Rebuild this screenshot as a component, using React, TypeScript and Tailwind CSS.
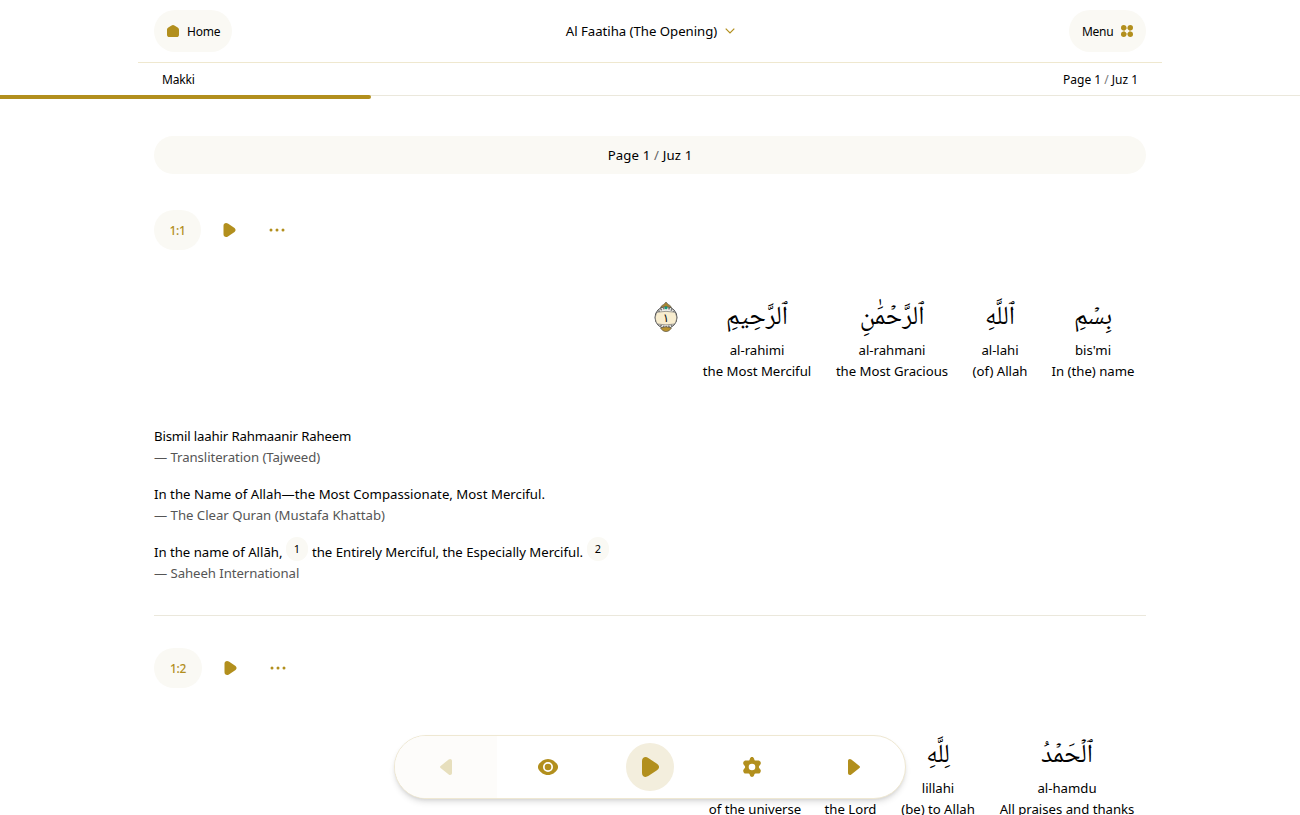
type IconProps = { className?: string };

function PlayIcon({ className = '' }: IconProps) {
  return (
    <svg viewBox="0 0 12 14" className={className} fill="currentColor">
      <path d="M0 2.800C0 .3 2.400-.7 4.400.6l5.900 3.900c2.300 1.500 2.300 3.500 0 5L4.400 13.400C2.400 14.700 0 13.700 0 11.200Z" />
    </svg>
  );
}

function StepIcon({ className = '' }: IconProps) {
  return (
    <svg viewBox="0 0 12 16" className={className} fill="currentColor">
      <path d="M0 2C0 .2 1.9-.5 3.3.6l7.5 5.800c1.600 1.200 1.600 2 0 3.200l-7.500 5.800C1.900 16.500 0 15.800 0 14Z" />
    </svg>
  );
}

function DotsIcon() {
  return (
    <svg viewBox="0 0 16 4" className="h-1 w-4" fill="currentColor">
      <circle cx="2" cy="2" r="1.5" />
      <circle cx="8" cy="2" r="1.5" />
      <circle cx="14" cy="2" r="1.5" />
    </svg>
  );
}

function HomeIcon() {
  return (
    <svg viewBox="0 0 12 12" className="h-3 w-3" fill="currentColor">
      <path d="M4.600.5a2.400 2.400 0 0 1 2.800 0l3.300 2.100c.8.600 1.300 1.300 1.300 2.300v4.500A2.600 2.600 0 0 1 9.400 12H2.600A2.600 2.600 0 0 1 0 9.400V4.900c0-1 .5-1.700 1.300-2.300Z" />
    </svg>
  );
}

function MenuIcon() {
  return (
    <svg viewBox="0 0 12 12" className="h-3 w-3" fill="currentColor">
      <path d="M2.500 2.500h7v7h-7Zm1.300 1.300v4.400h4.400V3.800Z" fillRule="evenodd" opacity=".45" />
      <circle cx="2.700" cy="2.700" r="2.700" />
      <circle cx="9.300" cy="2.700" r="2.700" />
      <circle cx="2.700" cy="9.300" r="2.700" />
      <circle cx="9.300" cy="9.300" r="2.700" />
    </svg>
  );
}

function EyeIcon() {
  return (
    <svg viewBox="0 0 20 16" className="h-4 w-5" fill="currentColor">
      <path
        fillRule="evenodd"
        d="M10 0c4.300 0 7.300 2.600 9.200 5.300 1.100 1.600 1.100 3.800 0 5.400C17.300 13.400 14.300 16 10 16S2.700 13.400.8 10.700c-1.100-1.600-1.100-3.800 0-5.400C2.700 2.600 5.700 0 10 0Zm0 3a5 5 0 1 0 0 10 5 5 0 0 0 0-10Z"
      />
      <circle cx="10" cy="8" r="3.300" />
    </svg>
  );
}

function GearIcon() {
  return (
    <svg viewBox="0 0 20 20" className="h-5 w-5" fill="currentColor">
      <path
        fillRule="evenodd"
        d="M7.900 1.700C8.300.5 9 0 10 0s1.700.5 2.100 1.700l.4 1.200c.2.600.6.800 1.200.7l1.800-.2c1.200-.1 2.200.1 2.800 1.200.7 1.200.7 2.200-.1 3.200l-1 1.300c-.4.500-.4 1.300 0 1.800l1 1.300c.8 1 .8 2 .1 3.200-.6 1.100-1.600 1.300-2.800 1.200l-1.800-.2c-.6-.1-1 .1-1.200.7l-.4 1.200C11.700 19.500 11 20 10 20s-1.700-.5-2.100-1.700l-.4-1.200c-.2-.6-.6-.8-1.200-.7l-1.800.2c-1.200.1-2.200-.1-2.800-1.200-.7-1.200-.7-2.200.1-3.200l1-1.300c.4-.5.4-1.300 0-1.800l-1-1.300c-.8-1-.8-2-.1-3.200.6-1.100 1.600-1.300 2.800-1.200l1.800.2c.6.100 1-.1 1.200-.7ZM10 6.700a3.300 3.300 0 1 0 0 6.600 3.300 3.300 0 0 0 0-6.600Z"
      />
    </svg>
  );
}

function VerseMarker() {
  return (
    <svg viewBox="0 0 24 30" className="h-[30px] w-6">
      <circle cx="12" cy="15.500" r="11" fill="#eeeeea" stroke="#444" strokeWidth="1" />
      <circle cx="12" cy="15.500" r="9.300" fill="none" stroke="#777" strokeWidth="1.800" strokeDasharray="1.500 1.200" />
      <path d="M6.500 5.800C7 3.300 9.500 3 10.600 1.500L12 0l1.400 1.500C14.500 3 17 3.300 17.500 5.800Q12 3.500 6.500 5.800Z" fill="#a58435" stroke="#555" strokeWidth=".6" />
      <path d="M6.500 26Q12 23.500 17.500 26 15.500 29.500 12 29.700 8.500 29.500 6.500 26Z" fill="#b9922f" stroke="#555" strokeWidth=".6" />
      <path d="M3.500 10.200Q12 8.500 20.500 10.200C23.300 13 23.300 18.500 20.500 22Q12 23.800 3.500 22C.7 18.500.7 13 3.500 10.200Z" fill="#f8edcf" stroke="#666" strokeWidth=".6" />
      <circle cx="12" cy="5.800" r="1.500" fill="#169b77" />
      <text x="12" y="20" textAnchor="middle" fontSize="12" fontFamily="DejaVu Sans" fill="#111">١</text>
    </svg>
  );
}

type WordProps = { arabic: string; latin: string; meaning: string; width: string };

function Word({ arabic, latin, meaning, width }: WordProps) {
  return (
    <div className={`flex shrink-0 flex-col items-center whitespace-nowrap ${width}`}>
      <span lang="ar" dir="rtl" className="h-[50px] font-['Noto_Naskh_Arabic','Amiri','DejaVu_Sans',serif] text-[26px] leading-[56px]">
        {arabic}
      </span>
      <span dir="ltr">{latin}</span>
      <span dir="ltr">{meaning}</span>
    </div>
  );
}

function VerseActions({ verse, width }: { verse: string; width: string }) {
  return (
    <div className="flex h-10 items-center text-[#b28f1d]">
      <div className={`flex h-10 items-center justify-center rounded-[20px] bg-[#faf9f4] pt-px text-xs font-medium tracking-[-0.3px] ${width}`}>
        {verse}
      </div>
      <PlayIcon className="ml-[22px] h-3.5 w-[13px]" />
      <div className="ml-[33px]">
        <DotsIcon />
      </div>
    </div>
  );
}

function Footnote({ children, className }: { children: string; className: string }) {
  return (
    <span className={`inline-flex h-6 w-[22px] -translate-y-1 items-center justify-center rounded-full bg-[#faf9f4] align-middle text-[11px] leading-5 ${className}`}>
      {children}
    </span>
  );
}

export default function App() {
  return (
    <div className="relative h-[815px] w-full overflow-hidden bg-white font-['Noto_Sans','Open_Sans',sans-serif] text-[13.2px] leading-[21px] tracking-[-0.02px] text-black">
      <header className="relative h-24 border-b border-[#ebe8dc]">
        <div className="mx-auto h-[95px] w-[1024px]">
          <div className="flex h-[63px] items-center justify-between border-b border-[#efe8cf] px-4">
            <button className="flex h-[42px] w-[78px] items-center rounded-[21px] bg-[#faf9f4] pl-[13px] text-xs tracking-[-0.2px]">
              <span className="text-[#b28f1d]"><HomeIcon /></span>
              <span className="ml-2 pt-0.5">Home</span>
            </button>
            <button className="flex items-center whitespace-nowrap">
              Al Faatiha (The Opening)
              <svg viewBox="0 0 10 6" className="ml-2 h-1.5 w-2.5" fill="none" stroke="#b28f1d" strokeWidth="1.2">
                <path d="m.7.700 4.300 4.300L9.300.700" />
              </svg>
            </button>
            <button className="flex h-[42px] w-[77px] items-center rounded-[21px] bg-[#faf9f4] pl-[13px] text-xs tracking-[-0.3px]">
              <span className="pt-0.5">Menu</span>
              <span className="ml-2 text-[#b28f1d]"><MenuIcon /></span>
            </button>
          </div>
          <div className="flex h-8 items-center justify-between px-6 pt-0.5 text-xs">
            <span className="tracking-[-0.2px]">Makki</span>
            <span>Page 1 <span className="text-[#777]">/</span> Juz 1</span>
          </div>
        </div>
        <div className="absolute top-[95px] left-0 h-1 w-[371px] rounded-r-sm bg-[#b28f1d]" />
      </header>

      <main className="mx-auto w-[992px] pt-10">
        <div className="flex h-[38px] items-center justify-center rounded-[19px] bg-[#faf9f4]">
          <span className="tracking-[0.15px]">Page 1 <span className="text-[#666]">/</span> Juz 1</span>
        </div>

        <section className="mt-9 h-[406px] border-b border-[#ebe8dc]">
          <VerseActions verse="1:1" width="w-[47px]" />
          <div dir="rtl" className="mt-10 flex">
            <Word arabic="بِسۡمِ" latin="bis'mi" meaning="In (the) name" width="w-[106px]" />
            <Word arabic="ٱللَّهِ" latin="al-lahi" meaning="(of) Allah" width="w-[80px]" />
            <Word arabic="ٱلرَّحۡمَٰنِ" latin="al-rahmani" meaning="the Most Gracious" width="w-[136px]" />
            <Word arabic="ٱلرَّحِيمِ" latin="al-rahimi" meaning="the Most Merciful" width="w-[134px]" />
            <div className="flex w-12 justify-center pt-3"><VerseMarker /></div>
          </div>
          <div className="mt-[44px] flex flex-col gap-4 whitespace-nowrap">
            <div className="h-[42px]">
              <p className="tracking-[-0.15px]">Bismil laahir Rahmaanir Raheem</p>
              <p className="tracking-[-0.07px] text-[#555]">— Transliteration (Tajweed)</p>
            </div>
            <div className="h-[42px]">
              <p className="tracking-[0.02px]">In the Name of Allah—the Most Compassionate, Most Merciful.</p>
              <p className="text-[#555]">— The Clear Quran (Mustafa Khattab)</p>
            </div>
            <div className="h-[42px]">
              <p className="flex h-[21px] items-center">
                <span className="w-[132px]">In the name of Allāh,</span>
                <Footnote className="mr-1">1</Footnote>
                <span className="w-[275px]">the Entirely Merciful, the Especially Merciful.</span>
                <Footnote className="">2</Footnote>
              </p>
              <p className="tracking-[-0.07px] text-[#555]">— Saheeh International</p>
            </div>
          </div>
        </section>

        <section className="pt-8">
          <VerseActions verse="1:2" width="w-12" />
          <div dir="rtl" className="mt-10 flex">
            <Word arabic="ٱلۡحَمۡدُ" latin="al-hamdu" meaning="All praises and thanks" width="w-[158px]" />
            <Word arabic="لِلَّهِ" latin="lillahi" meaning="(be) to Allah" width="w-[100px]" />
            <Word arabic="رَبِّ" latin="rabbi" meaning="the Lord" width="w-[75px]" />
            <Word arabic="ٱلۡعَٰلَمِينَ" latin="al-'alamina" meaning="of the universe" width="w-[116px]" />
          </div>
        </section>
      </main>

      <nav className="absolute top-[735px] left-[394px] grid h-16 w-[512px] grid-cols-5 overflow-hidden rounded-full border border-[#efe8d2] bg-white text-[#b28f1d] shadow-[0_4px_6px_-1px_rgba(0,0,0,0.12),0_2px_4px_-2px_rgba(0,0,0,0.12)]">
        <button className="flex items-center justify-center bg-[#fdfcfa] text-[#e7dfbd]">
          <StepIcon className="h-4 w-3 rotate-180" />
        </button>
        <button className="flex items-center justify-center"><EyeIcon /></button>
        <button className="flex items-center justify-center">
          <span className="flex h-12 w-12 items-center justify-center rounded-full bg-[#f3eedd]">
            <PlayIcon className="h-5 w-[17px]" />
          </span>
        </button>
        <button className="flex items-center justify-center"><GearIcon /></button>
        <button className="flex items-center justify-center"><StepIcon className="h-4 w-3" /></button>
      </nav>
    </div>
  );
}
